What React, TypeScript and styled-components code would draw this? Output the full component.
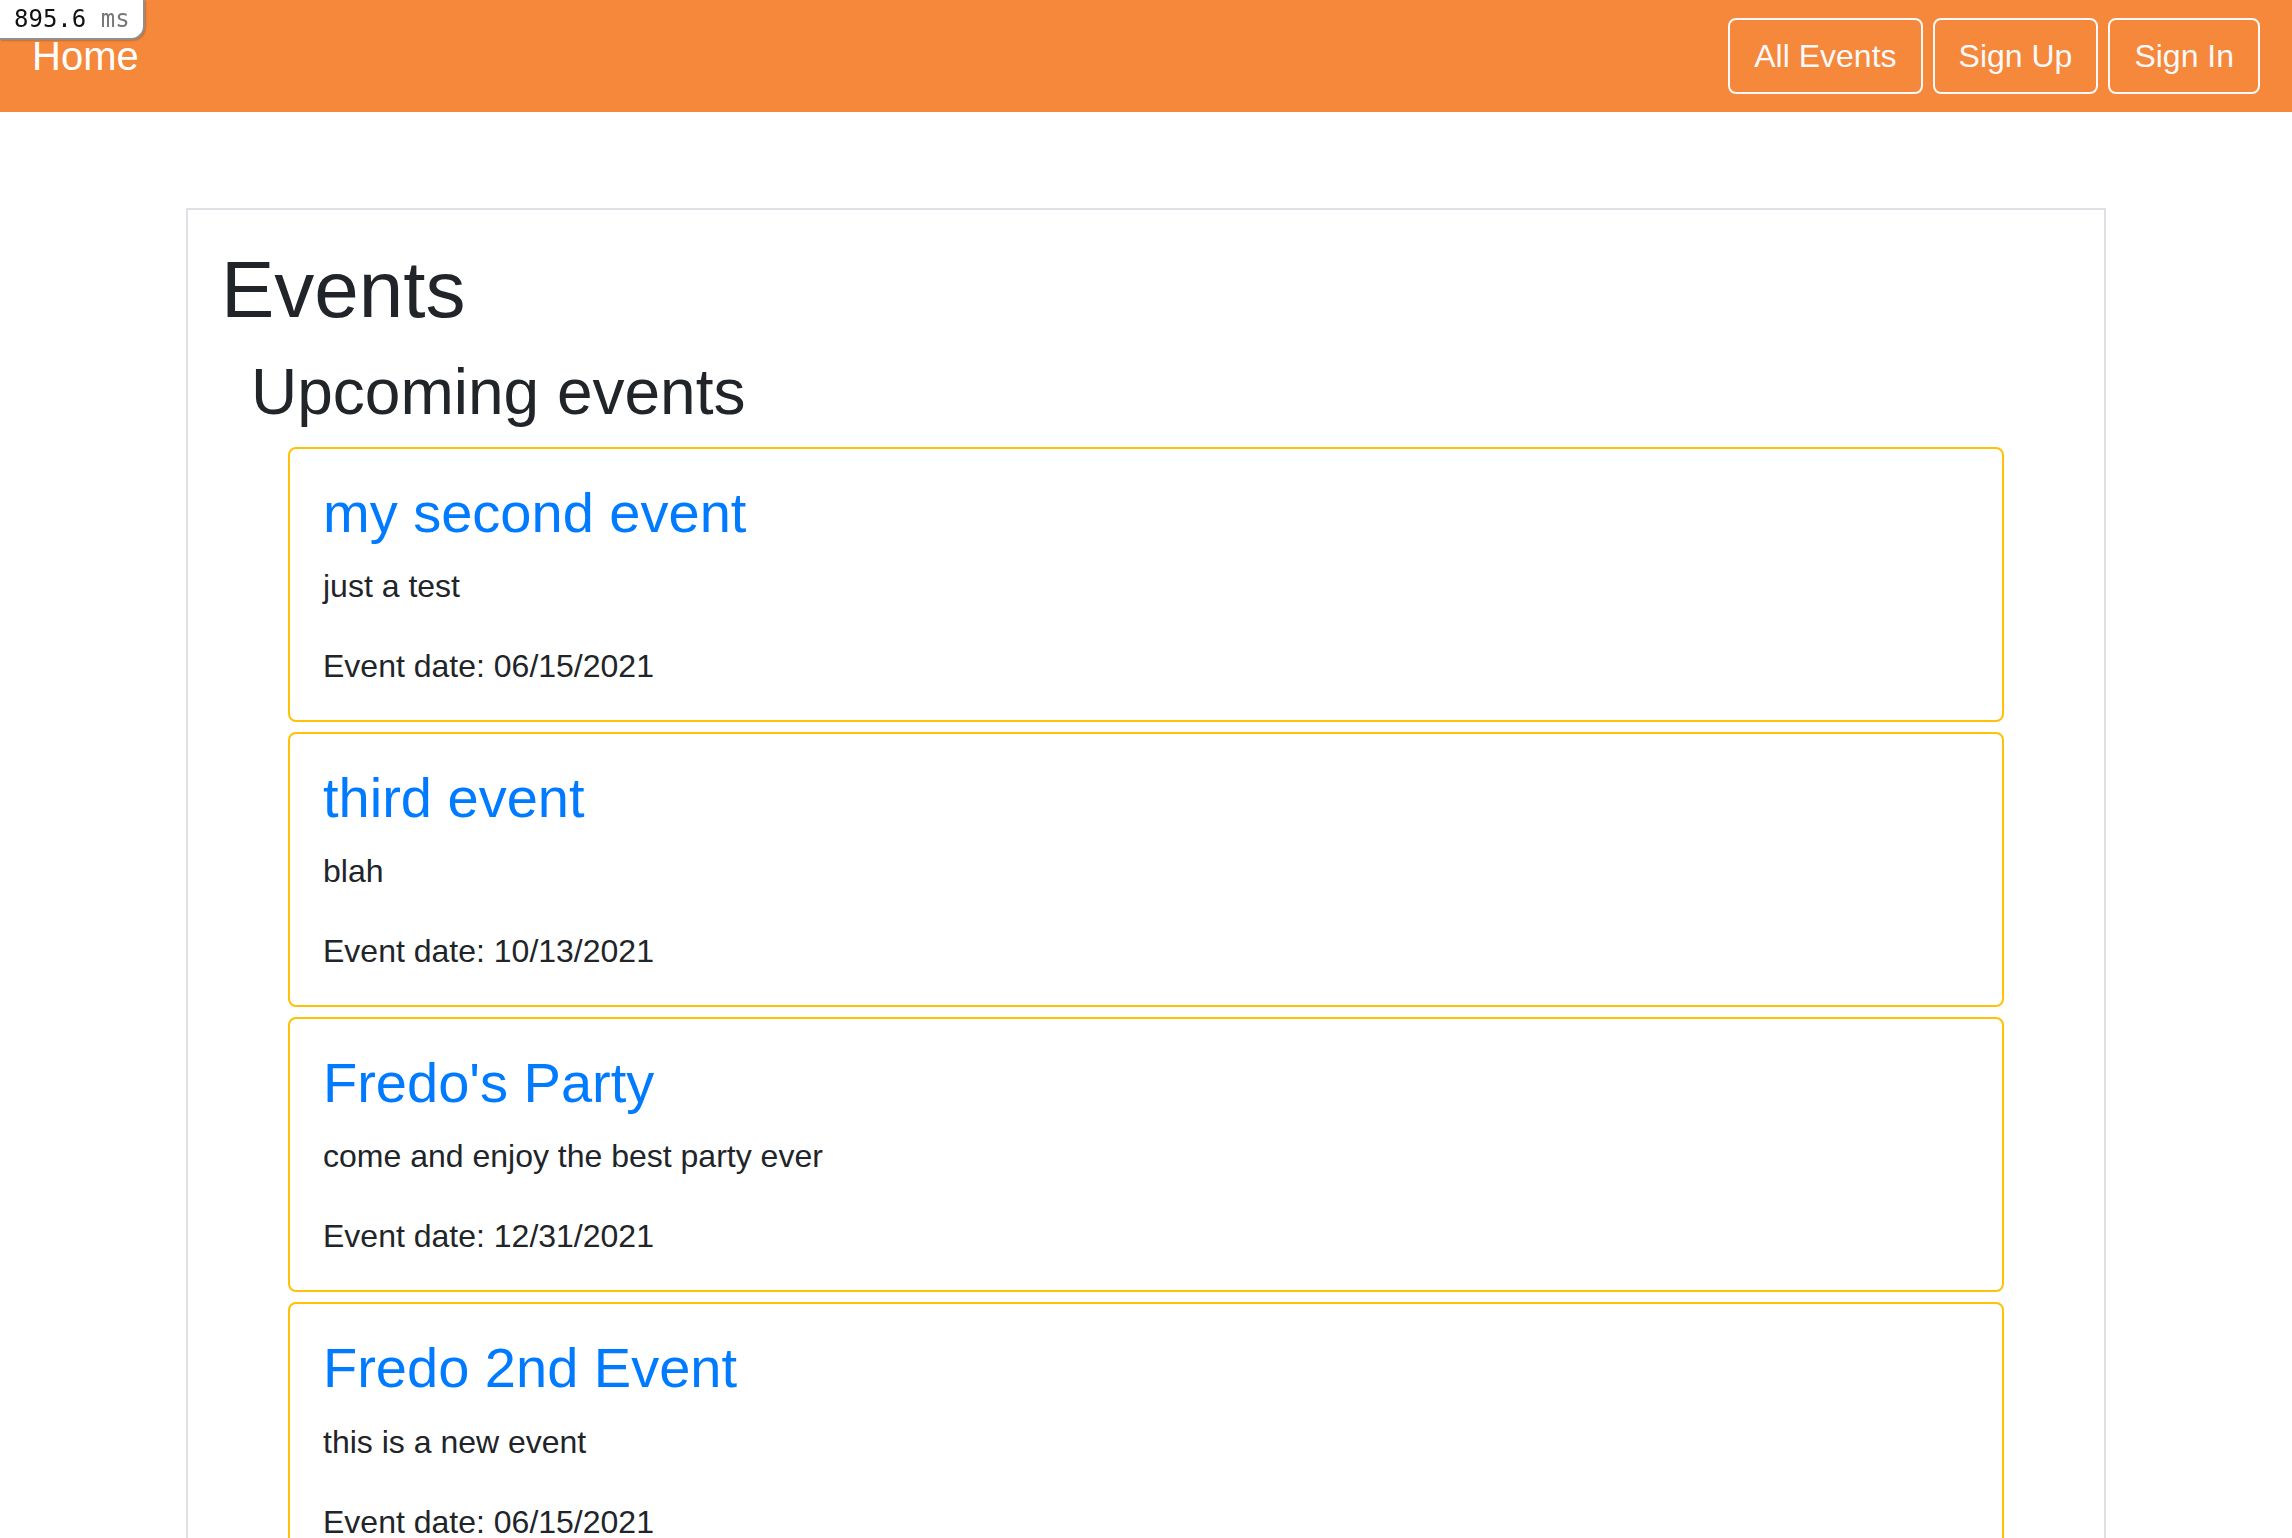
import React from "react";
import styled, { createGlobalStyle } from "styled-components";

const GlobalStyle = createGlobalStyle`
  html, body {
    margin: 0;
    padding: 0;
    background: #ffffff;
  }
  body {
    font-family: "Liberation Sans", Arial, sans-serif;
    color: #212529;
    font-size: 32px;
    line-height: 1.5;
  }
  * { box-sizing: border-box; }
`;

const Timer = styled.div`
  position: fixed;
  top: 0;
  left: 0;
  width: 145px;
  height: 40px;
  background: #ffffff;
  border-right: 2px solid #8f8f8f;
  border-bottom: 2px solid #8f8f8f;
  border-bottom-right-radius: 14px;
  box-shadow: 1px 1px 2px rgba(0, 0, 0, 0.2);
  font-family: "DejaVu Sans Mono", monospace;
  font-size: 24px;
  line-height: 38px;
  padding-left: 14px;
  color: #111;
  white-space: nowrap;
  z-index: 10;
`;

const Unit = styled.span`
  color: #777;
`;

const NavBar = styled.nav`
  display: flex;
  align-items: center;
  justify-content: space-between;
  height: 112px;
  padding: 16px 32px;
  background: #f6883b;
`;

const Brand = styled.a`
  color: #ffffff;
  font-size: 40px;
  line-height: 60px;
  padding: 10px 0;
  text-decoration: none;
`;

const NavButtons = styled.div`
  display: flex;
  gap: 10px;
`;

const OutlineButton = styled.button`
  font-family: "Liberation Sans", Arial, sans-serif;
  font-size: 32px;
  line-height: 48px;
  padding: 12px 24px;
  border: 2px solid #f8f9fa;
  border-radius: 8px;
  background: transparent;
  color: #f8f9fa;
  cursor: pointer;
`;

const Panel = styled.main`
  width: 1920px;
  margin: 96px auto 0;
  border: 2px solid #dee2e6;
  padding: 32px 33px 0;
`;

const PageTitle = styled.h1`
  margin: 0 0 16px;
  font-size: 80px;
  line-height: 96px;
  font-weight: 400;
`;

const SectionTitle = styled.h2`
  margin: 0 0 16px 30px;
  font-size: 64px;
  line-height: 76.8px;
  font-weight: 400;
`;

const CardList = styled.div`
  display: flex;
  flex-direction: column;
  gap: 10px;
  padding: 0 67px;
`;

const Card = styled.article`
  border: 2px solid #ffc107;
  border-radius: 8px;
  padding: 30px 33px;
`;

const CardTitle = styled.h3`
  margin: 0 0 16px;
  font-size: 56px;
  line-height: 67.2px;
  font-weight: 400;
  color: #007bff;
`;

const CardText = styled.p`
  margin: 0 0 32px;
  font-size: 32px;
  line-height: 48px;
  &:last-child { margin-bottom: 0; }
`;

const events = [
  { title: "my second event", desc: "just a test", date: "06/15/2021" },
  { title: "third event", desc: "blah", date: "10/13/2021" },
  { title: "Fredo's Party", desc: "come and enjoy the best party ever", date: "12/31/2021" },
  { title: "Fredo 2nd Event", desc: "this is a new event", date: "06/15/2021" },
];

export default function App() {
  return (
    <>
      <GlobalStyle />
      <Timer>
        895.6 <Unit>ms</Unit>
      </Timer>
      <NavBar>
        <Brand href="#">Home</Brand>
        <NavButtons>
          <OutlineButton>All Events</OutlineButton>
          <OutlineButton>Sign Up</OutlineButton>
          <OutlineButton>Sign In</OutlineButton>
        </NavButtons>
      </NavBar>
      <Panel>
        <PageTitle>Events</PageTitle>
        <SectionTitle>Upcoming events</SectionTitle>
        <CardList>
          {events.map((e) => (
            <Card key={e.title}>
              <CardTitle>{e.title}</CardTitle>
              <CardText>{e.desc}</CardText>
              <CardText>Event date: {e.date}</CardText>
            </Card>
          ))}
        </CardList>
      </Panel>
    </>
  );
}
